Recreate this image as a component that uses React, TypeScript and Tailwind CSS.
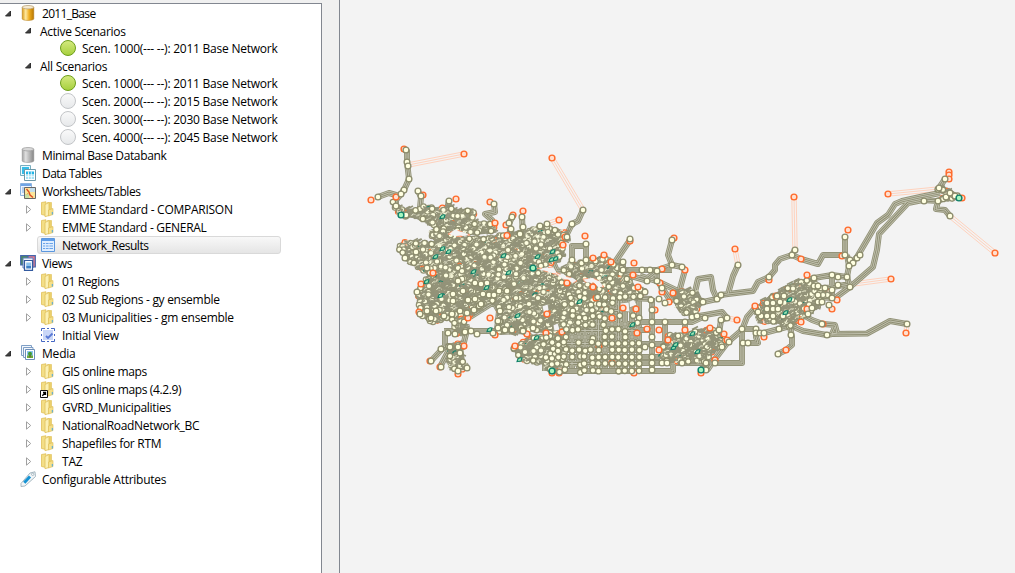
import React from 'react';

type Pt = [number, number];

/* ---------- tree ---------- */

type IconName = 'dbGold' | 'dbGray' | 'on' | 'off' | 'tables' | 'sheets' | 'folder' | 'link' | 'table' | 'views' | 'view' | 'media' | 'tag';

function Folder() {
  return (
    <>
      <path d="M1.500 1.500 6 .8V14.500L1.500 13.500Z" fill="#f3de86" stroke="#dfbf58" strokeWidth=".8" />
      <path d="M7.500 1.500H11.500V12.500H7.500Z" fill="#ecd06c" stroke="#dfbf58" strokeWidth=".6" />
      <path d="M5 3.500 9 1.500V14.500L5 15.700Z" fill="#fbf0b4" stroke="#e0c05a" strokeWidth=".8" />
      <path d="M8.500 9 13 7.500V13.500L8.500 15Z" fill="#f5e08a" stroke="#dcbb50" strokeWidth=".6" />
      <path d="M12.300 11V13.500" stroke="#4aa7e0" strokeWidth="1" />
    </>
  );
}

function Icon({ name }: { name: IconName }) {
  const gold = name === 'dbGold';
  return (
    <svg width="16" height="16" viewBox="0 0 16 16" className="shrink-0 overflow-visible">
      <defs>
        <linearGradient id="gGold"><stop offset="0" stopColor="#d99a16" /><stop offset=".3" stopColor="#ffe9a0" /><stop offset=".6" stopColor="#f0ae20" /><stop offset="1" stopColor="#b87700" /></linearGradient>
        <linearGradient id="gGray"><stop offset="0" stopColor="#a2a2a2" /><stop offset=".3" stopColor="#e0e0e0" /><stop offset="1" stopColor="#868686" /></linearGradient>
        <linearGradient id="gOn" x2="0" y2="1"><stop offset="0" stopColor="#d5ea80" /><stop offset="1" stopColor="#a5cf3c" /></linearGradient>
        <linearGradient id="gOff" x2="0" y2="1"><stop offset="0" stopColor="#fafafa" /><stop offset="1" stopColor="#e6e8ea" /></linearGradient>
      </defs>
      {(gold || name === 'dbGray') && (
        <>
          <path d="M2.200 2.200V13.800C2.200 16 13.800 16 13.800 13.800V2.200Z" fill={gold ? 'url(#gGold)' : 'url(#gGray)'} stroke={gold ? '#b07a1c' : '#8a8a8a'} strokeWidth=".5" />
          <ellipse cx="8" cy="2.200" rx="5.800" ry="1.700" fill={gold ? '#f6ead0' : '#d8d8d8'} stroke={gold ? '#b39a6c' : '#999'} strokeWidth=".7" />
        </>
      )}
      {name === 'on' && <circle cx="8" cy="8" r="7.500" fill="url(#gOn)" stroke="#6f9f1c" />}
      {name === 'off' && <circle cx="8" cy="8" r="7.500" fill="url(#gOff)" stroke="#c3c5c8" />}
      {name === 'folder' && <Folder />}
      {name === 'link' && (
        <>
          <Folder />
          <path d="M.5 9.500H7.500V16.500H.5Z" fill="#fff" stroke="#111" />
          <path d="M2.300 14.700 5 12M3 11.500H5.500V14" stroke="#000" strokeWidth="1.300" fill="none" />
        </>
      )}
      {name === 'tables' && (
        <>
          <path d="M.5.5H10.500V10.500H.5Z" fill="#eafaff" stroke="#78aebf" />
          <path d="M2 2H9V9H2Z" fill="#36bde8" />
          <path d="M4.500 4.500H15.500V15.500H4.500Z" fill="#fff" stroke="#6d98a8" />
          <path d="M6 6.500H14V9H6Z" fill="#22b4e6" />
          <path d="M6 9H14V14H6Z" fill="#a4e2f5" />
          <path d="M6 11.300H14M8.500 6.500V14M11.300 6.500V14" stroke="#fff" strokeWidth=".8" />
        </>
      )}
      {name === 'sheets' && (
        <>
          <path d="M.5.5H11.500V12.500H.5Z" fill="#eef5ff" stroke="#8db4e0" />
          <path d="M1 1H11V3H1Z" fill="#6fa5e6" />
          <path d="M2 5H4M2 7H4M2 9H4" stroke="#7aaae0" />
          <path d="M4.500 4.500H15.500V15.500H4.500Z" fill="#fbe59a" stroke="#666" />
          <path d="M10 5H15V9H10Z" fill="#c4deec" /><path d="M5 11H9V15H5Z" fill="#c7dfa6" />
          <path d="M6.500 6 9 9 10 12 13 14.500" stroke="#dd4b25" strokeWidth="1.400" fill="none" />
          <path d="M9 9 7 11.500" stroke="#e99a3a" fill="none" />
        </>
      )}
      {name === 'table' && (
        <>
          <path d="M1.500 1.500H14.500V14.500H1.500Z" fill="#dfeeff" stroke="#5b97de" />
          <path d="M2 2H14V4H2Z" fill="#5f9de8" />
          <path d="M3 6.500H13M3 9H13M3 11.500H13" stroke="#6ca4e8" strokeWidth="1.100" />
          <path d="M5.500 5V13.500M9 5V13.500" stroke="#dfeeff" strokeWidth=".8" />
        </>
      )}
      {name === 'views' && (
        <>
          <path d="M.7.7H9.500V10H.7Z" fill="#4e8c5c" stroke="#4466ad" strokeWidth="1.200" />
          <path d="M8 .7H15.300V12H8Z" fill="#e5778a" stroke="#4466ad" strokeWidth="1.200" />
          <path d="M3 3H13V13H3Z" fill="#eef3fb" stroke="#5a7cbc" />
          <path d="M4.500 5.500H12.500V15.300H4.500Z" fill="#fff" stroke="#335a9f" strokeWidth="1.200" />
          <path d="M6.200 7.500H11V11H6.200Z" fill="#8ec2ed" /><path d="M6.200 11H11V13.500H6.200Z" fill="#3e7fc4" />
        </>
      )}
      {name === 'view' && (
        <>
          <path d="M3 3H13V13H3Z" fill="#c9d6f7" />
          <path d="M1.500 4V1.500H5M7 1.500H9M11 1.500H14.500V4M14.500 12V14.500H11M9 14.500H7M5 14.500H1.500V12M1.500 7V9M14.500 7V9" stroke="#4567c4" fill="none" />
          <path d="M6 9 8 11 12.500 6.500" stroke="#5878d4" strokeWidth="1.800" fill="none" />
        </>
      )}
      {name === 'media' && (
        <>
          <path d="M1.500.5H11.500V10.500H1.500Z" fill="#f4f8fd" stroke="#7f9fc6" />
          <path d="M3.500 2.500H13V12.500H3.500Z" fill="#f4f8fd" stroke="#7f9fc6" />
          <path d="M5.500 4.500H14.500V14.500H5.500Z" fill="#fff" stroke="#6d8eb8" />
          <path d="M7 6H13V11H7Z" fill="#8bc5ef" /><path d="M7 10.500H13V13H7Z" fill="#6bab3c" />
          <circle cx="10" cy="8.800" r="2" fill="#419b31" /><path d="M10 10V12.500" stroke="#704c1b" />
        </>
      )}
      {name === 'tag' && (
        <>
          <path d="M1 12.500 10 2 15 .8 15.500 5.500 5 15 1 15.500Z" fill="#f2f6f8" stroke="#9db0ba" strokeWidth=".9" />
          <path d="M4.300 11.800 10 5.500" stroke="#1593d3" strokeWidth="3" />
          <circle cx="12.700" cy="3.300" r="1.200" fill="#fff" stroke="#8ca1ac" strokeWidth=".7" />
        </>
      )}
    </svg>
  );
}

function Arrow({ open }: { open: boolean }) {
  return (
    <svg width="8" height="9" viewBox="0 0 8 9" className="shrink-0">
      {open ? <path d="M6.500 2V7H1.500Z" fill="#404040" stroke="#262626" strokeWidth=".9" /> : <path d="M2.500 .8V8.200L6.700 4.500Z" fill="#fff" stroke="#a0a0a0" />}
    </svg>
  );
}

type Row = { label: string; icon?: IconName; arrow?: 'open' | 'closed'; pad: string; h?: string; track: string; selected?: boolean };

const L0 = 'pl-1';
const L1 = 'pl-6';
const L2 = 'pl-11';
const scen = 'tracking-[-0.235px]';

const rows: Row[] = [
  { label: '2011_Base', icon: 'dbGold', arrow: 'open', pad: L0, track: 'tracking-[-0.68px]' },
  { label: 'Active Scenarios', arrow: 'open', pad: L1, h: 'h-[17px]', track: 'tracking-[-0.3px]' },
  { label: 'Scen. 1000(--- --): 2011 Base Network', icon: 'on', pad: L2, track: scen },
  { label: 'All Scenarios', arrow: 'open', pad: L1, h: 'h-[17px]', track: 'tracking-[-0.27px]' },
  { label: 'Scen. 1000(--- --): 2011 Base Network', icon: 'on', pad: L2, track: scen },
  { label: 'Scen. 2000(--- --): 2015 Base Network', icon: 'off', pad: L2, track: scen },
  { label: 'Scen. 3000(--- --): 2030 Base Network', icon: 'off', pad: L2, track: scen },
  { label: 'Scen. 4000(--- --): 2045 Base Network', icon: 'off', pad: L2, track: scen },
  { label: 'Minimal Base Databank', icon: 'dbGray', pad: L0, track: 'tracking-[-0.37px]' },
  { label: 'Data Tables', icon: 'tables', pad: L0, track: 'tracking-[-0.54px]' },
  { label: 'Worksheets/Tables', icon: 'sheets', arrow: 'open', pad: L0, track: 'tracking-[-0.48px]' },
  { label: 'EMME Standard - COMPARISON', icon: 'folder', arrow: 'closed', pad: L1, track: 'tracking-[-0.26px]' },
  { label: 'EMME Standard - GENERAL', icon: 'folder', arrow: 'closed', pad: L1, track: 'tracking-[-0.31px]' },
  { label: 'Network_Results', icon: 'table', pad: L1, track: 'tracking-[-0.45px]', selected: true },
  { label: 'Views', icon: 'views', arrow: 'open', pad: L0, track: 'tracking-[-0.38px]' },
  { label: '01 Regions', icon: 'folder', arrow: 'closed', pad: L1, track: 'tracking-[-0.38px]' },
  { label: '02 Sub Regions - gy ensemble', icon: 'folder', arrow: 'closed', pad: L1, track: 'tracking-[-0.29px]' },
  { label: '03 Municipalities - gm ensemble', icon: 'folder', arrow: 'closed', pad: L1, track: 'tracking-[-0.25px]' },
  { label: 'Initial View', icon: 'view', pad: L1, track: 'tracking-[-0.27px]' },
  { label: 'Media', icon: 'media', arrow: 'open', pad: L0, track: 'tracking-[-0.2px]' },
  { label: 'GIS online maps', icon: 'folder', arrow: 'closed', pad: L1, track: 'tracking-[-0.38px]' },
  { label: 'GIS online maps (4.2.9)', icon: 'link', arrow: 'closed', pad: L1, track: 'tracking-[-0.36px]' },
  { label: 'GVRD_Municipalities', icon: 'folder', arrow: 'closed', pad: L1, track: 'tracking-[-0.29px]' },
  { label: 'NationalRoadNetwork_BC', icon: 'folder', arrow: 'closed', pad: L1, track: 'tracking-[-0.32px]' },
  { label: 'Shapefiles for RTM', icon: 'folder', arrow: 'closed', pad: L1, track: 'tracking-[-0.29px]' },
  { label: 'TAZ', icon: 'folder', arrow: 'closed', pad: L1, track: 'tracking-[-0.18px]' },
  { label: 'Configurable Attributes', icon: 'tag', pad: L0, track: 'tracking-[-0.27px]' },
];

function TreeRow({ row }: { row: Row }) {
  const body = (
    <>
      {row.icon && <Icon name={row.icon} />}
      <span className={`whitespace-pre pt-0.5 ${row.icon ? 'ml-1.5' : ''} ${row.track}`}>{row.label}</span>
    </>
  );
  return (
    <div className={`flex shrink-0 items-center ${row.h ?? 'h-[18px]'} ${row.pad}`}>
      <span className="flex w-4 shrink-0">{row.arrow && <Arrow open={row.arrow === 'open'} />}</span>
      {row.selected ? (
        <div className="-ml-[3px] flex h-[18px] w-[244px] items-center rounded-[3px] border border-[#d9d9d9] bg-linear-to-b from-[#f8f8f8] to-[#e5e5e5] pl-[2px]">{body}</div>
      ) : body}
    </div>
  );
}

/* ---------- network map ---------- */

const roads: Pt[][] = [
  [[404, 149], [407, 151], [407, 162], [409, 179], [404, 190], [401, 194], [396, 200], [396, 206], [401, 213]],
  [[378, 197], [389, 193], [396, 195], [400, 196]],
  [[418, 191], [421, 197], [420, 208]],
  [[449, 201], [447, 209]],
  [[494, 204], [495, 212], [485, 214], [492, 220], [485, 226]],
  [[512, 217], [509, 224], [511, 236]], [[522, 217], [523, 236]],
  [[583, 210], [578, 221], [572, 224], [567, 234]],
  [[586, 244], [586, 262]], [[586, 246], [572, 246], [572, 262]],
  [[630, 240], [615, 262]], [[553, 262], [557, 271], [565, 270]],
  [[610, 262], [623, 262], [623, 270], [672, 270]],
  [[610, 270], [645, 280], [657, 271], [657, 280], [672, 303]],
  [[672, 240], [668, 255], [672, 265], [682, 267], [685, 270], [679, 292]],
  [[640, 270], [657, 270], [672, 265]], [[640, 276], [657, 281], [680, 292]],
  [[703, 302], [717, 299], [721, 295], [728, 294], [753, 291], [758, 282], [769, 277], [775, 270], [775, 265], [780, 259], [792, 255], [795, 250]],
  [[695, 292], [698, 279], [711, 277], [713, 290], [717, 299]],
  [[728, 294], [733, 276], [738, 265]],
  [[792, 255], [801, 259], [818, 264], [823, 255], [845, 255], [845, 237]],
  [[692, 317], [705, 315], [722, 312], [727, 318], [721, 320], [719, 333]],
  [[610, 297], [652, 299]], [[652, 298], [652, 371]], [[652, 322], [692, 322], [705, 316]],
  [[665, 322], [665, 345]], [[685, 322], [685, 340]], [[638, 322], [652, 322]],
  [[552, 371], [673, 371], [673, 363]], [[640, 363], [742, 363], [742, 329]],
  [[640, 344], [665, 344]], [[640, 357], [660, 357]], [[640, 330], [652, 330]],
  [[700, 369], [708, 369], [712, 363], [728, 342], [742, 330], [747, 317], [755, 308]],
  [[742, 329], [756, 329], [756, 337], [758, 343], [743, 343]],
  [[756, 333], [764, 333], [779, 329], [790, 326]],
  [[857, 257], [877, 223], [888, 215], [895, 204], [902, 201], [920, 197], [940, 193]],
  [[850, 287], [873, 267], [877, 250], [879, 234], [908, 203], [923, 200], [938, 201]],
  [[938, 201], [936, 209], [945, 210], [950, 216]],
  [[945, 179], [939, 188], [948, 191], [958, 198]], [[938, 201], [946, 197], [958, 197]],
  [[847, 255], [849, 266], [847, 277], [850, 287], [835, 298]], [[857, 257], [849, 266]],
  [[808, 280], [814, 278], [832, 275], [847, 277]], [[832, 275], [832, 300]],
  [[815, 290], [850, 284]], [[812, 297], [835, 298]], [[818, 285], [818, 308]],
  [[803, 315], [812, 320], [823, 324], [835, 325], [837, 333], [827, 335], [803, 331], [792, 326]],
  [[835, 327], [832, 334], [867, 333.5], [890, 321], [907, 324]],
  [[790, 327], [792, 337], [792, 345], [786, 350], [778, 354]],
  [[460, 318], [460, 333], [466, 334], [463, 346]], [[444, 331], [490, 331], [525, 331]],
  [[445, 331], [445, 346]], [[445, 346], [431, 361]], [[450, 348], [440, 367]],
  [[470, 327], [455, 331], [445, 331]], [[470, 317], [494, 302], [499, 311], [497, 330]],
  [[500, 332], [523, 331], [531, 337]],
];

const zones: { pts: Pt[]; n: number }[] = [
  { n: 230, pts: [[394, 201], [403, 210], [415, 209], [423, 206], [437, 208], [447, 205], [457, 210], [473, 209], [475, 215], [470, 221], [480, 224], [495, 222], [496, 232], [477, 234], [457, 232], [443, 230], [427, 222], [413, 217], [400, 217], [394, 208]] },
  { n: 2500, pts: [[398, 249], [400, 244], [405, 241], [427, 243], [436, 242], [431, 236], [430, 231], [437, 228], [447, 232], [460, 237], [493, 238], [503, 234], [520, 232], [530, 230], [540, 225], [550, 227], [566, 232], [569, 238], [563, 243], [564, 253], [557, 262], [546, 266], [532, 270], [545, 273], [558, 276], [562, 281], [575, 284], [584, 284], [594, 285], [606, 290], [606, 308], [590, 325], [560, 334], [532, 331], [499, 332], [498, 311], [493, 302], [480, 307], [470, 316], [452, 318], [433, 323], [419, 314], [419, 302], [415, 291], [424, 283], [429, 274], [417, 267], [405, 258]] },
  { n: 260, pts: [[563, 269], [572, 263], [586, 261], [600, 259], [610, 258], [614, 263], [622, 266], [626, 272], [617, 278], [623, 287], [608, 289], [590, 279], [580, 281], [568, 275]] },
  { n: 90, pts: [[610, 277], [628, 278], [635, 287], [646, 289], [640, 298], [620, 295], [606, 291]] },
  { n: 200, pts: [[513, 347], [527, 338], [540, 335], [560, 334], [568, 350], [560, 369], [549, 370], [543, 364], [533, 362], [519, 360]] },
  { n: 70, pts: [[448, 345], [462, 341], [464, 361], [468, 368], [458, 373], [449, 367]] },
  { n: 22, pts: [[452, 318], [466, 317], [465, 327], [470, 333], [455, 334]] },
  { n: 100, pts: [[673, 292], [682, 290], [698, 292], [703, 302], [698, 310], [692, 316], [680, 312], [676, 306]] },
  { n: 260, pts: [[662, 346], [668, 335], [683, 334], [695, 330], [712, 328], [722, 335], [727, 342], [713, 353], [704, 363], [683, 363], [666, 362], [660, 358]] },
  { n: 360, pts: [[755, 308], [766, 299], [777, 293], [792, 284], [807, 279], [815, 280], [822, 287], [830, 293], [821, 301], [818, 308], [808, 313], [803, 319], [790, 327], [778, 323], [760, 323]] },
  { n: 26, pts: [[938, 188], [948, 190], [958, 197], [948, 201], [938, 200], [946, 194]] },
];

const water: Pt[][] = [
  [[537, 268.5], [544, 268], [553, 267], [557, 273], [564, 276], [573, 278], [577, 281], [573, 283], [563, 279], [556, 274], [546, 271.5]],
  [[583, 279], [593, 278], [599, 281], [604, 287], [598, 287], [594, 283], [585, 282]],
  [[448, 234], [455, 229.5], [463, 232], [470, 235], [456, 236.5]],
  [[626, 303], [634, 299], [637, 305], [629, 308]],
  [[542, 306], [548, 304], [549, 310], [544, 315]],
  [[553, 325], [558, 323], [560, 330], [554, 331]],
  [[620, 303], [629, 302], [630, 312], [621, 311]],
];

const gridX = [545, 552, 558.5, 565, 572, 579, 585, 592, 598.5, 605, 612, 618.5, 625, 632, 639];
const gridY = [297, 304, 310.5, 317, 324, 330.5, 337, 343.5, 350, 357, 363.5, 371];

const connectors: [Pt, Pt][] = [
  [[464, 154], [408, 165]], [[552, 158], [583, 210]], [[559, 220], [547, 224]], [[794, 197], [795, 250]], [[735, 249], [738, 265]],
  [[888, 194], [939, 189]], [[891, 279], [853, 284]], [[995, 253], [950, 216]], [[737, 320], [727, 318]], [[906, 333], [907, 324]],
];

const orange: Pt[] = [
  [404, 149], [464, 154], [371, 200], [423, 195], [456, 199], [490, 202], [513, 215], [506, 225], [523, 211], [507, 235.500], [552, 158], [559, 220], [585, 236],
  [604, 255], [630, 241], [634, 263], [633, 275], [662, 269], [674, 238], [685, 270], [673, 293], [669, 302], [662, 292], [655, 310], [659, 330], [659, 350], [685, 330],
  [769, 280], [735, 249], [794, 197], [801, 259], [848, 230], [842, 256], [888, 194], [949, 172], [949, 175], [949, 179], [962, 198], [995, 253], [891, 279],
  [737, 320], [906, 333], [807, 275], [837, 300], [832, 309], [764, 337], [786, 350], [701, 373], [710, 328], [724, 334], [727, 340], [715, 360], [490, 318], [495, 335],
  [527, 334], [464, 346], [440, 367], [430, 361], [458, 374], [421, 284], [567, 283], [547, 314], [546, 333], [612, 318], [623, 308], [636, 309], [396, 197],
  [552, 373], [559, 373], [634, 373], [515, 346], [755, 306], [776, 296], [807, 309], [801, 322], [823, 324], [468, 318], [562, 332], [637, 333], [599, 346], [612, 363],
  [596, 298], [563, 245], [593, 258], [611, 262], [593, 287], [660, 283], [668, 340], [647, 329], [565, 237], [419, 312], [433, 273], [495, 223], [638, 287],
];

const cream: Pt[] = [
  [406, 150], [407, 162], [408, 166], [409, 179], [404, 190], [401, 194], [378, 197], [396, 206], [406, 215], [418, 191], [421, 196], [449, 201], [494, 204],
  [512, 217], [509, 223], [511, 229], [522, 217], [523, 227], [520, 234], [583, 210], [572, 224], [547, 224], [540, 226], [567, 237], [586, 244], [586, 260], [572, 260], [630, 239], [623, 262],
  [623, 270], [642, 270], [650, 270], [657, 271], [647, 281], [657, 281], [662, 288], [645, 292], [651, 300], [659, 299], [665, 303], [672, 240], [672, 265], [682, 267],
  [703, 302], [717, 299], [721, 295], [738, 265], [769, 277], [792, 255], [795, 250], [845, 237], [845, 255], [850, 260], [853, 263], [849, 266], [857, 258], [860, 255],
  [847, 277], [850, 287], [838, 277], [832, 275], [814, 278], [814, 286], [818, 286], [825, 288], [832, 290], [838, 285], [818, 295], [818, 302], [829, 305], [832, 298], [822, 302], [812, 308], [808, 314],
  [822, 324], [827, 335], [907, 324], [791, 335], [778, 354], [950, 216], [938, 201], [924, 201], [945, 179], [939, 188], [946, 197], [950, 193], [955, 196],
  [767, 303], [773, 303], [767, 309], [773, 309], [778, 309], [761, 316], [767, 316], [773, 316], [780, 302], [777, 296], [784, 296], [783, 316], [758, 312],
  [652, 310], [652, 322], [652, 337], [652, 345], [652, 357], [652, 363], [652, 370], [665, 322], [685, 322], [645, 347], [692, 317], [697, 316], [705, 318], [721, 320], [727, 318], [719, 330], [729, 342],
  [742, 329], [743, 343], [748, 343], [756, 329], [756, 333], [760, 333], [764, 333], [779, 329], [722, 347], [715, 363], [706, 363], [682, 363], [706, 370], [662, 363], [667, 363],
  [431, 361], [441, 349], [441, 367], [450, 347], [458, 347], [460, 353], [467, 368], [458, 371], [448, 333], [455, 334], [471, 331], [477, 334], [465, 332], [493, 333], [505, 330], [512, 330], [523, 331], [533, 328],
  [417, 292], [420, 314], [427, 311], [436, 311], [431, 318], [444, 316], [452, 314], [460, 311], [467, 313], [474, 310], [481, 304], [489, 295], [500, 311], [498, 321], [498, 328], [405, 258], [416, 252], [427, 268],
  [453, 294], [453, 301], [462, 279], [468, 300], [475, 299], [483, 294], [494, 295], [499, 291], [507, 291], [463, 291], [458, 281], [481, 284], [487, 283], [475, 283],
];

const green: Pt[] = [
  [401, 215], [959, 198], [701, 370], [552, 371], [533, 268], [538, 257], [490, 330], [436, 257], [443, 249], [449, 252], [504, 256], [441, 296], [518, 316],
  [520, 360], [553, 252], [537, 338], [509, 273], [674, 348], [786, 313], [443, 217], [556, 259], [474, 272], [552, 260], [693, 334], [487, 288], [427, 282], [633, 325], [580, 302], [698, 352], [790, 300], [676, 345],
];

function rng(seed: number) {
  let s = seed;
  return () => {
    s = (s * 1664525 + 1013904223) % 4294967296;
    return s / 4294967296;
  };
}

function inside([x, y]: Pt, poly: Pt[]) {
  let hit = false;
  for (let i = 0, j = poly.length - 1; i < poly.length; j = i++) {
    const [xi, yi] = poly[i];
    const [xj, yj] = poly[j];
    if (yi > y !== yj > y && x < ((xj - xi) * (y - yi)) / (yj - yi) + xi) hit = !hit;
  }
  return hit;
}

const line = (pts: Pt[]) => 'M' + pts.map((p) => p.join(' ')).join('L');

function scatter(poly: Pt[], n: number, seed: number): { p: Pt; k: number }[] {
  const r = rng(seed);
  const xs = poly.map((p) => p[0]);
  const ys = poly.map((p) => p[1]);
  const x0 = Math.min(...xs);
  const y0 = Math.min(...ys);
  const w = Math.max(...xs) - x0;
  const h = Math.max(...ys) - y0;
  const out: { p: Pt; k: number }[] = [];
  for (let t = 0; out.length < n && t < n * 8; t++) {
    const p: Pt = [Math.round((x0 + r() * w) * 2) / 2, Math.round((y0 + r() * h) * 2) / 2];
    if (inside(p, poly)) out.push({ p, k: r() });
  }
  return out;
}

const roadPath = roads.map(line).join('');
const gridPath =
  gridX.map((x, i) => `M${x} ${i < 3 ? 337 : 297}V371`).join('') +
  gridY.map((y) => `M${y > 350 ? 552 : 545} ${y}H${y < 320 && y > 300 ? 618 : 639}`).join('');

function Roads({ d }: { d: string }) {
  return (
    <g fill="none" strokeLinejoin="round">
      <path d={d} stroke="#939379" strokeWidth="6" />
      <path d={d} stroke="#c6c6b4" strokeWidth="4.200" />
      <path d={d} stroke="#8e8e73" strokeWidth="2.800" />
      <path d={d} stroke="#c6c6b4" strokeWidth=".9" />
    </g>
  );
}

function edgePoints(pts: Pt[]): Pt[] {
  const out: Pt[] = [];
  pts.forEach((a, i) => {
    const b = pts[(i + 1) % pts.length];
    const len = Math.hypot(b[0] - a[0], b[1] - a[1]);
    const steps = Math.max(1, Math.floor(len / 4.500));
    const nx = (b[1] - a[1]) / len;
    const ny = -(b[0] - a[0]) / len;
    for (let s = 0; s < steps; s++) {
      const x = a[0] + ((b[0] - a[0]) * s) / steps;
      const y = a[1] + ((b[1] - a[1]) * s) / steps;
      const side = inside([x + nx * 2, y + ny * 2], pts) ? 1.500 : -1.500;
      out.push([x + nx * side, y + ny * side]);
    }
  });
  return out;
}

function Zone({ pts, n, seed }: { pts: Pt[]; n: number; seed: number }) {
  const edge = edgePoints(pts);
  return (
    <g>
      <path d={line(pts) + 'Z'} fill="#989880" stroke="#939379" strokeWidth="1.500" strokeLinejoin="round" />
      {edge.map((p, i) => (i % 7 === 2 ? <circle key={i} cx={p[0]} cy={p[1]} r="2.800" fill="#ffe0d0" stroke="#ff6e30" strokeWidth="1.200" /> : null))}
      {scatter(pts, n, seed).map(({ p: [x, y], k }, i) => {
        if (k < 0.24) return <circle key={i} cx={x} cy={y} r="2.700" fill="#ffffe1" stroke="#919174" strokeWidth="1.200" />;
        if (k < 0.7) return <path key={i} d={`M${x - 3} ${y - 1}l6 ${k < 0.45 ? 3 : -3}M${x - 2} ${y + 2}l5 ${k < 0.55 ? -2 : 2}`} stroke="#939379" strokeWidth="1.700" />;
        if (k < 0.975) return <path key={i} d={`M${x - 2.500} ${y + 1}q1 -3.200 4 -2`} fill="none" stroke="#e2e2c6" strokeWidth="1" />;
        if (k < 0.987) return <path key={i} d={`M${x - 2.500} ${y + 1.500}q1.500 -4 5 -2`} fill="none" stroke="#17806a" strokeWidth="1.300" />;
        return <path key={i} d={`M${x - 2} ${y}q2 -2 4 0`} fill="none" stroke="#ff7033" strokeWidth="1" />;
      })}
      {edge.map((p, i) => (i % 7 === 0 || i % 7 === 4 ? <circle key={i} cx={p[0]} cy={p[1]} r="2.700" fill="#ffffe1" stroke="#8b8b6c" strokeWidth="1.300" /> : null))}
    </g>
  );
}

function NetworkMap() {
  const r = rng(77);
  return (
    <svg width="675" height="573" viewBox="340 0 675 573" className="block">
      {connectors.map(([[ax, ay], [bx, by]], i) => {
        const len = Math.hypot(bx - ax, by - ay);
        const nx = -(by - ay) / len;
        const ny = (bx - ax) / len;
        return [-2.200, 0, 2.200].map((o) => (
          <path key={`${i}${o}`} d={`M${ax + nx * o} ${ay + ny * o}L${bx + nx * o} ${by + ny * o}`} stroke="#ffd2bd" strokeWidth="1" />
        ));
      })}
      <Roads d={gridPath} />
      <Roads d={roadPath} />
      {zones.map((z, i) => <Zone key={i} pts={z.pts} n={z.n} seed={i * 97 + 13} />)}
      {water.map((w, i) => <path key={i} d={line(w) + 'Z'} fill="#f3f3f3" stroke={i < 3 ? '#ff9468' : '#939379'} strokeWidth=".8" strokeDasharray={i < 3 ? '5 6' : undefined} />)}
      {orange.map(([x, y], i) => <circle key={i} cx={x} cy={y} r="2.900" fill="#ffdfcf" stroke="#ff6a2a" strokeWidth="1.400" />)}
      {gridX.map((x, i) => gridY.map((y, j) => {
        const skip = r() < (j < 7 ? 0.3 : 0.14);
        const dx = (r() - 0.5) * (i < 8 || j < 6 ? 3 : 0.6);
        const dy = (r() - 0.5) * (i < 8 || j < 6 ? 3 : 0.6);
        if (skip || (i < 3 && j < 6) || (i < 1 && j > 9) || (i > 10 && j > 0 && j < 3)) return null;
        return <circle key={`${i}-${j}`} cx={x + dx} cy={y + dy} r="2.800" fill="#ffffe1" stroke="#8b8b6c" strokeWidth="1.300" />;
      }))}
      {cream.map(([x, y], i) => <circle key={i} cx={x} cy={y} r="2.900" fill="#ffffe1" stroke="#8b8b6c" strokeWidth="1.300" />)}
      {green.map(([x, y], i) => i < 5
        ? <circle key={i} cx={x} cy={y} r="2.900" fill="#a5f5bd" stroke="#0d7f68" strokeWidth="1.400" />
        : <path key={i} d={`M${x - 3} ${y + 1.500}q1 -4.500 5 -3.500l-1 3Z`} fill="#a0e8b4" stroke="#0d7f68" strokeWidth="1.100" />)}
    </svg>
  );
}

export default function App() {
  return (
    <div className="flex h-[573px] w-[1015px] overflow-hidden bg-[#f0f0f0] font-['Open_Sans','Noto_Sans',sans-serif] text-[12px] leading-none text-black">
      <div className="w-[340px] shrink-0 border-r border-[#828790] pt-[3px]">
        <div className="flex h-[570px] w-[322px] flex-col border-t border-r border-[#828790] bg-white">
          {rows.map((row, i) => <TreeRow key={i} row={row} />)}
        </div>
      </div>
      <div className="min-w-0 flex-1 bg-[#f3f3f3]">
        <NetworkMap />
      </div>
    </div>
  );
}
